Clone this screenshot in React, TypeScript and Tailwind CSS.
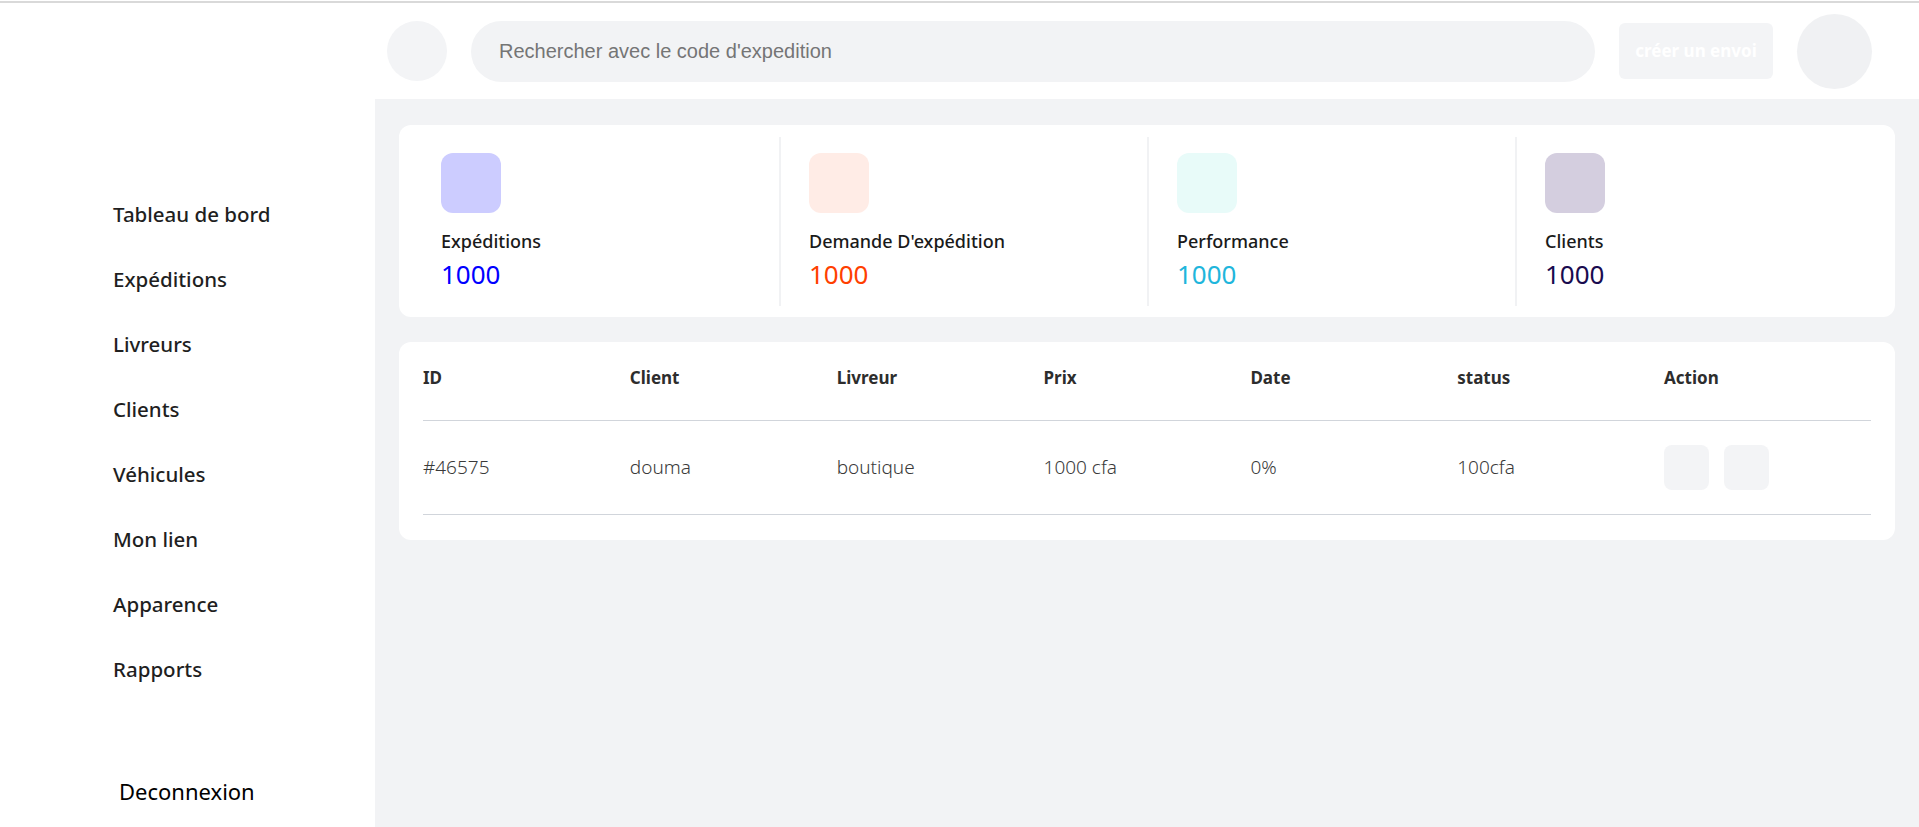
import React from "react";

const navItems = [
  "Tableau de bord",
  "Expéditions",
  "Livreurs",
  "Clients",
  "Véhicules",
  "Mon lien",
  "Apparence",
  "Rapports",
];

const stats = [
  { label: "Expéditions", value: "1000", box: "bg-[#ccccff]", text: "text-[#0000ff]" },
  { label: "Demande D'expédition", value: "1000", box: "bg-[#ffece6]", text: "text-[#ff4000]" },
  { label: "Performance", value: "1000", box: "bg-[#e8fbf9]", text: "text-[#1fb6dc]" },
  { label: "Clients", value: "1000", box: "bg-[#d4cedf]", text: "text-[#190b4f]" },
];

const columns = ["ID", "Client", "Livreur", "Prix", "Date", "status", "Action"];

export default function App() {
  return (
    <div className="h-[827px] flex flex-col bg-white overflow-hidden" style={{ fontFamily: "'Noto Sans', sans-serif" }}>
      <div className="h-[1px] bg-white" />
      <div className="h-[2px] bg-[#d9d9d9]" />
      <div className="flex flex-1">
        {/* sidebar */}
        <aside className="w-[375px] shrink-0 bg-white flex flex-col">
          <nav className="mt-[179px] flex flex-col">
            {navItems.map((item, index) => (
              <a key={index} className="h-[65px] flex items-center pl-[113px] text-[20.5px] font-medium text-[#1f1f1f] cursor-pointer">
                {item}
              </a>
            ))}
          </nav>
          <button className="mt-[57px] h-[65px] flex items-center pl-[119px] text-[22px] text-black">
            Deconnexion
          </button>
        </aside>

        <div className="flex-1 flex flex-col">
          {/* header */}
          <header className="h-[96px] bg-white flex items-center gap-6 pl-3 pr-[47px]">
            <div className="w-[60px] h-[60px] rounded-full bg-[#f3f4f6] shrink-0" />
            <input
              type="text"
              placeholder="Rechercher avec le code d'expedition"
              className="flex-1 h-[61px] rounded-full bg-[#f2f3f5] pl-7 text-[20px] outline-none placeholder:text-[#757575]"
              style={{ fontFamily: "'Liberation Sans', Arial, sans-serif" }}
            />
            <button className="w-[154px] h-[56px] rounded-md bg-[#f3f4f6] text-white font-bold text-[17px] shrink-0">
              créer un envoi
            </button>
            <div className="w-[75px] h-[75px] rounded-full bg-[#f0f1f3] shrink-0" />
          </header>

          {/* main */}
          <main className="flex-1 bg-[#f2f3f5] px-6 pt-[26px] flex flex-col gap-[25px]">
            <div className="bg-white rounded-xl px-3 pt-3 pb-[11px] flex">
              {stats.map((item, index) => (
                <div
                  key={index}
                  className={`flex-1 border-l-2 pl-7 pt-4 pb-[14px] ${index === 0 ? "border-transparent" : "border-[#f1f2f4]"}`}
                >
                  <div className={`w-[60px] h-[60px] rounded-xl ${item.box}`} />
                  <p className="mt-4 text-[18px] leading-6 font-medium text-[#1a1a1a]">{item.label}</p>
                  <p className={`mt-[3px] text-[26px] leading-9 ${item.text}`}>{item.value}</p>
                </div>
              ))}
            </div>

            <div className="bg-white rounded-xl px-6 pt-6 pb-[25px]">
              <table className="w-full table-fixed">
                <thead>
                  <tr className="border-b border-[#d1d5db]">
                    {columns.map((col) => (
                      <th key={col} className="text-left pb-[30px] text-[17px] leading-6 font-bold text-[#2d2d2d]">
                        {col}
                      </th>
                    ))}
                  </tr>
                </thead>
                <tbody>
                  <tr className="border-b border-[#d1d5db]">
                    <td className="py-6 text-[19px] font-light text-[#3a3a3a]">#46575</td>
                    <td className="py-6 text-[19px] font-light text-[#3a3a3a]">douma</td>
                    <td className="py-6 text-[19px] font-light text-[#3a3a3a]">boutique</td>
                    <td className="py-6 text-[19px] font-light text-[#3a3a3a]">1000 cfa</td>
                    <td className="py-6 text-[19px] font-light text-[#3a3a3a]">0%</td>
                    <td className="py-6 text-[19px] font-light text-[#3a3a3a]">100cfa</td>
                    <td className="py-6">
                      <div className="flex gap-[15px]">
                        <button className="w-[45px] h-[45px] rounded-lg bg-[#f3f4f6]" />
                        <button className="w-[45px] h-[45px] rounded-lg bg-[#f3f4f6]" />
                      </div>
                    </td>
                  </tr>
                </tbody>
              </table>
            </div>
          </main>
        </div>
      </div>
    </div>
  );
}
